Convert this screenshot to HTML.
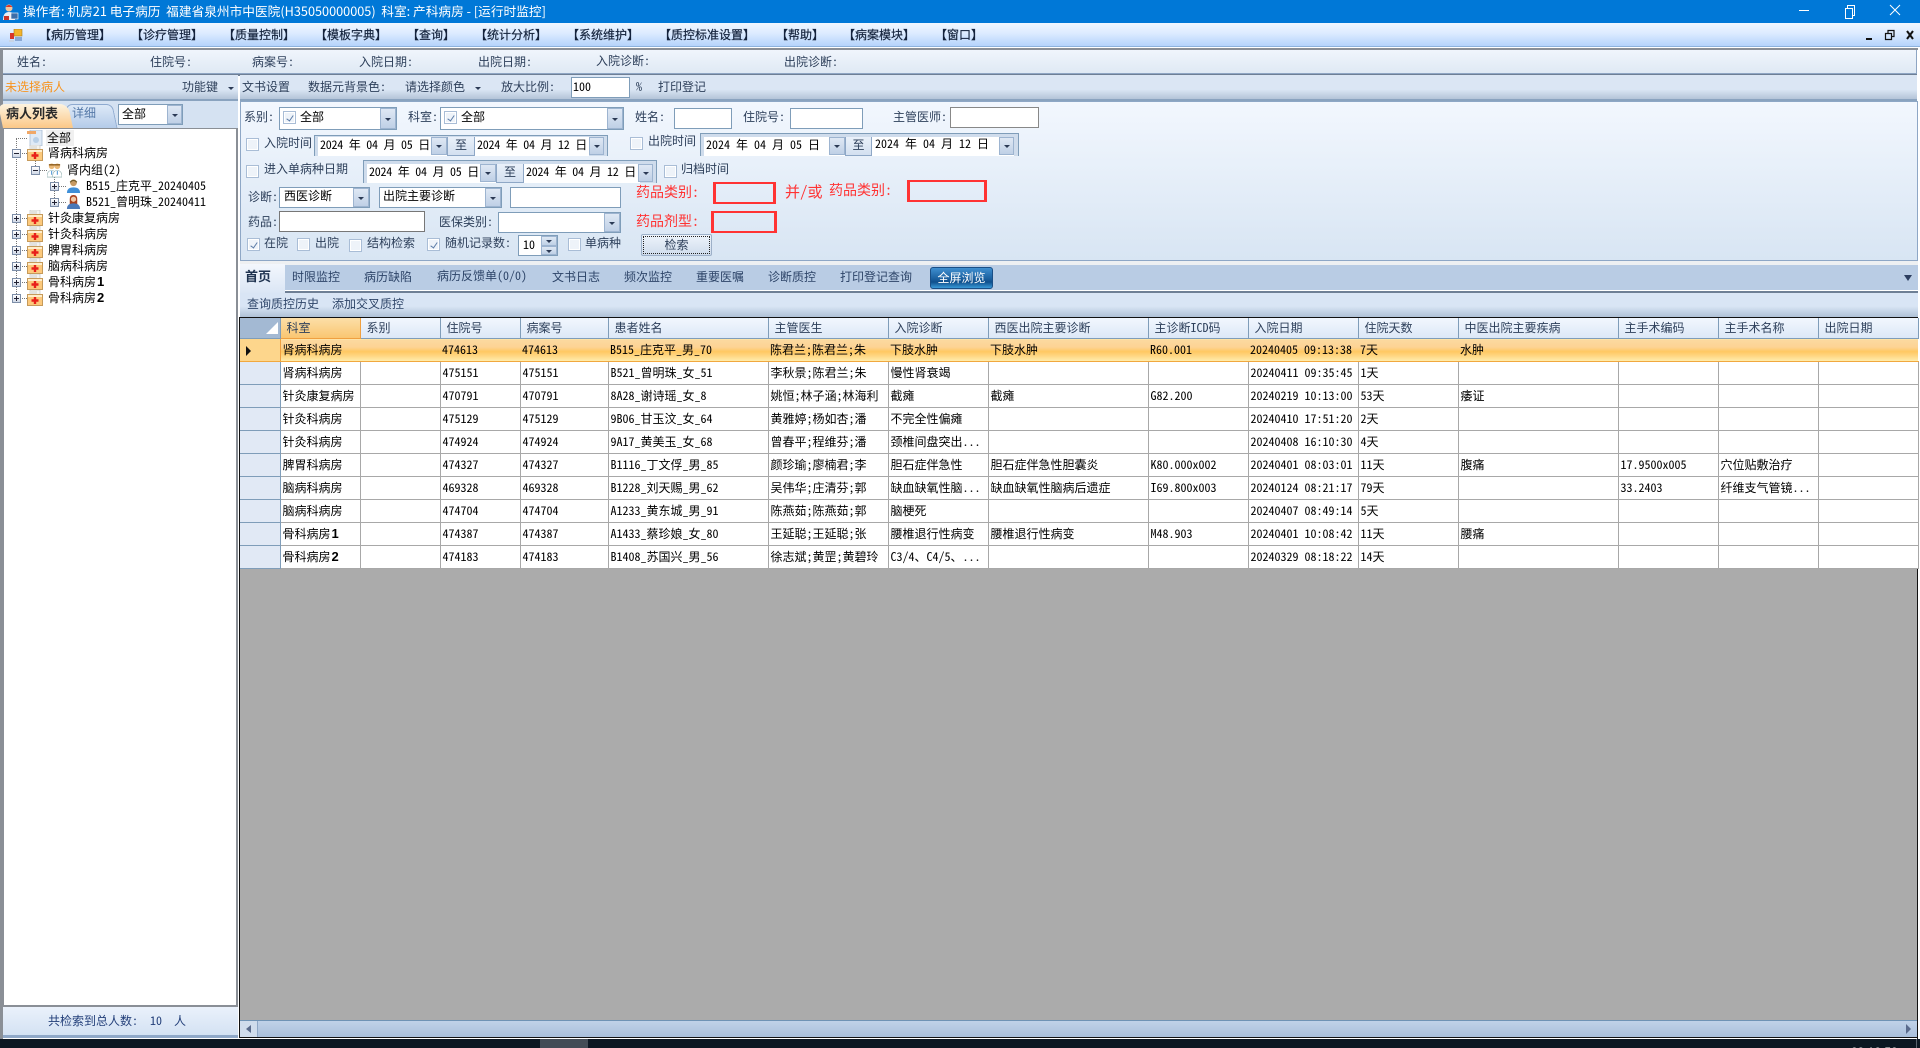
<!DOCTYPE html>
<html lang="zh"><head><meta charset="utf-8"><title>运行时监控</title>
<style>
html,body{margin:0;padding:0;width:1920px;height:1048px;overflow:hidden;background:#fff}
body{position:relative;font:12px/16px "Noto Sans Mono CJK SC","IPAGothic","WenQuanYi Zen Hei","Noto Sans CJK SC",monospace;color:#000}
div,span,svg,table,th,td{box-sizing:border-box}
.a,.t,.i,.c,.b,.k,.r{position:absolute}
.t{white-space:pre;height:16px;line-height:16px}
.l{color:#2d3f5a}
.i{background:#fff;border:1px solid #7f9db9}
.c{background:#fff;border:1px solid #7f9db9}
.b{background:linear-gradient(#dfe8f4,#bfd0e6);border:1px solid #9db4d0}
.b:after{content:"";position:absolute;left:50%;top:50%;margin:-1px 0 0 -3px;border:3px solid transparent;border-top:3px solid #2b3a55;border-bottom:0}
.k{width:13px;height:13px;background:#eef3f9;border:1px solid #a9bdd6;box-shadow:inset 0 0 0 1px #fff}
.k.on:after{content:"";position:absolute;left:4px;top:2px;width:3px;height:6px;border:solid #5a7aa6;border-width:0 1.5px 1.5px 0;transform:rotate(35deg)}
.r{border:solid #f33;border-width:2px 3px}
.red{color:#f33;font-size:14px;letter-spacing:0}
.m{font-size:12px;color:#14233c;-webkit-text-stroke:.2px #14233c}
.tab{color:#2d4468}
.p{width:9px;height:9px;background:linear-gradient(#fff,#cfd8e6);border:1px solid #7d8ea8;position:absolute}
.p:before{content:"";position:absolute;left:1px;right:1px;top:3px;height:1px;background:#223}
.p.plus:after{content:"";position:absolute;top:1px;bottom:1px;left:3px;width:1px;background:#223}
.dv{position:absolute;border-left:1px dotted #777}
.dh{position:absolute;border-top:1px dotted #777}
table{position:absolute;left:240px;top:318px;width:1678px;border-collapse:collapse;table-layout:fixed;background:#fff}
th,td{padding:0 0 0 2px;overflow:hidden;white-space:nowrap;font-weight:normal;text-align:left}
th{height:20px;padding-left:6px;background:linear-gradient(#f2f7fe,#dce8f7);border-right:1px solid #7f9db9;border-bottom:1px solid #7f9db9;color:#2d3f5a;line-height:20px}
td{height:23px;border-right:1px solid #a8a8a8;border-bottom:1px solid #a8a8a8;line-height:22px}
td.h{background:#e1e9f5;border-right:1px solid #7f9db9;border-bottom:1px solid #7f9db9;padding:0}
tr.s td{background:linear-gradient(#fcd9a0 0,#fdd394 35%,#ffc862 55%,#ffd784 75%,#ffefb0 100%);border-right:0;border-bottom:1px solid #f1a83f}
tr.s td.h{background:#fdd68c;border-right:1px solid #f0a040;position:relative}
b.n{font:bold 13px "Liberation Sans",sans-serif;margin-left:1px}
</style></head><body>
<svg width="0" height="0" style="position:absolute"><defs>
<symbol id="fold" viewBox="0 0 16 16"><rect x="3" y="0" width="10" height="6" fill="#f4f4f0" stroke="#bbb" stroke-width=".6"/><path d="M5 1v4M7 1v4M9 1v4" stroke="#aaa" stroke-width=".5"/><rect x=".5" y="4.500" width="15" height="11" fill="#fcc97c" stroke="#c69a5a"/><rect x="1" y="5" width="14" height="2" fill="#ffeecb"/><path d="M8 7v7M4.500 10.500h7" stroke="#e8201a" stroke-width="2.400"/></symbol>
<symbol id="male" viewBox="0 0 16 16"><circle cx="8" cy="4.500" r="3.600" fill="#c79a63"/><path d="M4.400 4q3.600-4 7.200 0" fill="none" stroke="#6b5a2a" stroke-width="1.200"/><path d="M1 15.500q0-6 7-6t7 6z" fill="#3f8fd8"/></symbol>
<symbol id="fem" viewBox="0 0 16 16"><path d="M4 11V5q0-4.500 4-4.500T12 5v6z" fill="#a8421f"/><circle cx="8" cy="5" r="2.800" fill="#f0c9a8"/><path d="M1 15.500q0-6 7-6t7 6z" fill="#4a78b8"/></symbol>
<symbol id="doc" viewBox="0 0 16 16"><circle cx="5" cy="4" r="3" fill="#e9b878"/><circle cx="11" cy="4" r="3" fill="#e9b878"/><path d="M2 2.500h6M8 2.500h6" stroke="#8a5a1a" stroke-width="1.500"/><path d="M0 15.500q0-7 5-7t5 7z" fill="#fff" stroke="#8aa" stroke-width=".6"/><path d="M6 15.500q0-7 5-7t5 7z" fill="#fff" stroke="#8aa" stroke-width=".6"/><path d="M5 9v4M11 9v4" stroke="#3a8ad0"/></symbol>
</defs></svg>

<!-- title bar -->
<div class="a" style="left:0;top:0;width:1920px;height:23px;background:#0078d7"></div>
<svg class="a" style="left:2px;top:3px" width="17" height="18" viewBox="0 0 17 18"><circle cx="7" cy="5" r="3.500" fill="#f0c8a0"/><path d="M3.500 4q3.500-4 7 0" fill="#d8352a"/><path d="M1 17q0-8 6-8t6 8z" fill="#e9edf3"/><rect x="9" y="10" width="7" height="6" fill="#3c6ea8" stroke="#fff" stroke-width=".6"/><rect x="2" y="13" width="5" height="4" fill="#c8352a"/></svg>
<div class="t" style="left:23px;top:3px;color:#fff;font:12.700px/16px 'Noto Sans CJK SC','WenQuanYi Zen Hei',sans-serif">操作者: 机房21 电子病历  福建省泉州市中医院(H35050000005)  科室: 产科病房 - [运行时监控]</div>
<svg class="a" style="left:1795px;top:0" width="120" height="23"><path d="M4 10.500h10" stroke="#fff"/><path d="M50.500 8.500h7v10h-7zM52.500 8V5.500h7v10H58" fill="none" stroke="#fff"/><path d="M95 5l10 10M105 5l-10 10" stroke="#fff"/></svg>

<!-- menu bar -->
<div class="a" style="left:0;top:23px;width:1920px;height:24px;background:linear-gradient(#f0f7ff,#dcebff 45%,#b5d3fb);border-bottom:1px solid #8db2dc"></div>
<svg class="a" style="left:9px;top:29px" width="14" height="13"><rect x="5" y="0" width="8" height="7" fill="#f3b32a" stroke="#a87c1a" stroke-width=".6"/><rect x="1" y="4" width="4" height="6" fill="#d8352a"/><rect x="6" y="8" width="7" height="4" fill="#8aa8d4"/><rect x="0" y="11" width="5" height="2" fill="#c8d4e4"/></svg>
<div class="t m" style="left:39px;top:27px">【病历管理】</div>
<div class="t m" style="left:131px;top:27px">【诊疗管理】</div>
<div class="t m" style="left:223px;top:27px">【质量控制】</div>
<div class="t m" style="left:315px;top:27px">【模板字典】</div>
<div class="t m" style="left:407px;top:27px">【查询】</div>
<div class="t m" style="left:475px;top:27px">【统计分析】</div>
<div class="t m" style="left:567px;top:27px">【系统维护】</div>
<div class="t m" style="left:659px;top:27px">【质控标准设置】</div>
<div class="t m" style="left:776px;top:27px">【帮助】</div>
<div class="t m" style="left:843px;top:27px">【病案模块】</div>
<div class="t m" style="left:935px;top:27px">【窗口】</div>
<svg class="a" style="left:1860px;top:27px" width="58" height="16"><path d="M6 11h6v2H6z" fill="#111"/><path d="M25.500 6.500h6v6h-6zM28 6V3.500h6v6h-2" fill="none" stroke="#111" stroke-width="1.200"/><path d="M47 4l6 8M53 4l-6 8" stroke="#111" stroke-width="2"/></svg>

<!-- frame -->
<div class="a" style="left:0;top:47px;width:1920px;height:1001px;background:#fff"></div>
<div class="a" style="left:0;top:48px;width:1918px;height:2px;background:#8a8f96"></div>
<div class="a" style="left:0;top:48px;width:3px;height:990px;background:#8a8f96"></div>
<div class="a" style="left:3px;top:50px;width:1914px;height:24px;background:linear-gradient(#f0f5fc,#dfe9f4);border:1px solid #8ea5c3;border-width:0 1px 1px 0"></div>
<div class="a" style="left:3px;top:74px;width:1914px;height:2px;background:#6e7f95"></div>
<div class="t l" style="left:17px;top:54px">姓名:</div>
<div class="t l" style="left:150px;top:54px">住院号:</div>
<div class="t l" style="left:252px;top:54px">病案号:</div>
<div class="t l" style="left:359px;top:54px">入院日期:</div>
<div class="t l" style="left:478px;top:54px">出院日期:</div>
<div class="t l" style="left:596px;top:53px">入院诊断:</div>
<div class="t l" style="left:784px;top:54px">出院诊断:</div>

<!-- toolbar -->
<div class="a" style="left:3px;top:75px;width:235px;height:26px;background:linear-gradient(#dbe6f4 60%,#b4c4d8);border-bottom:2px solid #8aa3bf"></div>
<div class="a" style="left:240px;top:75px;width:1677px;height:26px;background:linear-gradient(#dbe6f4 60%,#b4c4d8);border-bottom:2px solid #8aa3bf"></div>
<div class="t" style="left:5px;top:79px;color:#f7931e">未选择病人</div>
<div class="t l" style="left:182px;top:79px">功能键</div>
<div class="a" style="left:228px;top:87px;border:3px solid transparent;border-top:3px solid #2b3a55"></div>
<div class="t l" style="left:242px;top:79px">文书设置</div>
<div class="t l" style="left:308px;top:79px">数据元背景色:</div>
<div class="t l" style="left:405px;top:79px">请选择颜色</div>
<div class="a" style="left:475px;top:87px;border:3px solid transparent;border-top:3px solid #2b3a55"></div>
<div class="t l" style="left:501px;top:79px">放大比例:</div>
<div class="i" style="left:571px;top:77px;width:59px;height:21px"></div>
<div class="t" style="left:573px;top:79px">100</div>
<div class="t l" style="left:636px;top:79px">%</div>
<div class="t l" style="left:658px;top:79px">打印登记</div>

<!-- left panel -->
<div class="a" style="left:3px;top:101px;width:235px;height:27px;background:#d5e2f2"></div>
<div class="a" style="left:67px;top:104px;width:48px;height:24px;background:linear-gradient(#dde9f7,#b4cbe9);border:1px solid #8eaad0;border-bottom:0;border-radius:8px 6px 0 0;transform:skewX(12deg)"></div>
<div class="t" style="left:72px;top:105px;color:#5579a8;font-size:12px">详细</div>
<div class="a" style="left:3px;top:104px;width:70px;height:24px;background:linear-gradient(#fdf3df,#fbc887);border-radius:7px 8px 0 0;transform-origin:0 100%;transform:skewX(12deg)"></div>
<div class="t" style="left:6px;top:105px;font-size:13px;font-weight:bold;color:#2a2a2a">病人列表</div>
<div class="c" style="left:118px;top:104px;width:65px;height:21px"></div>
<div class="t" style="left:122px;top:106px">全部</div>
<div class="b" style="left:167px;top:105px;width:15px;height:19px"></div>
<div class="a" style="left:3px;top:128px;width:235px;height:879px;background:#fff;border:1px solid #8a8f96;border-width:1px 2px 2px 1px"></div>

<div class="dv" style="left:16px;top:138px;height:160px"></div>
<div class="dh" style="left:16px;top:138px;width:11px"></div>
<div class="dv" style="left:35px;top:158px;height:12px"></div>
<div class="dv" style="left:54px;top:176px;height:26px"></div>
<div class="dh" style="left:20px;top:153px;width:7px"></div>
<div class="dh" style="left:39px;top:170px;width:8px"></div>
<div class="dh" style="left:58px;top:186px;width:8px"></div>
<div class="dh" style="left:58px;top:202px;width:8px"></div>
<div class="dh" style="left:20px;top:218px;width:7px"></div>
<div class="dh" style="left:20px;top:234px;width:7px"></div>
<div class="dh" style="left:20px;top:250px;width:7px"></div>
<div class="dh" style="left:20px;top:266px;width:7px"></div>
<div class="dh" style="left:20px;top:282px;width:7px"></div>
<div class="dh" style="left:20px;top:298px;width:7px"></div>
<div class="p" style="left:12px;top:149px"></div>
<div class="p" style="left:31px;top:166px"></div>
<div class="p plus" style="left:50px;top:182px"></div>
<div class="p plus" style="left:50px;top:198px"></div>
<div class="p plus" style="left:12px;top:214px"></div>
<div class="p plus" style="left:12px;top:230px"></div>
<div class="p plus" style="left:12px;top:246px"></div>
<div class="p plus" style="left:12px;top:262px"></div>
<div class="p plus" style="left:12px;top:278px"></div>
<div class="p plus" style="left:12px;top:294px"></div>
<svg class="a" style="left:27px;top:130px" width="16" height="16"><rect x="3" y="0" width="12" height="16" fill="#dfeaf6" stroke="#a8bcd4" stroke-width=".8"/><rect x="0" y="1" width="9" height="3" fill="#f0a868"/><circle cx="9" cy="10" r="3" fill="#b8d0e8"/></svg>
<svg class="a" style="left:27px;top:145px" width="16" height="16"><use href="#fold"/></svg>
<svg class="a" style="left:47px;top:162px" width="15" height="16"><use href="#doc"/></svg>
<svg class="a" style="left:66px;top:178px" width="15" height="16"><use href="#male"/></svg>
<svg class="a" style="left:66px;top:194px" width="15" height="16"><use href="#fem"/></svg>
<svg class="a" style="left:27px;top:210px" width="16" height="16"><use href="#fold"/></svg>
<svg class="a" style="left:27px;top:226px" width="16" height="16"><use href="#fold"/></svg>
<svg class="a" style="left:27px;top:242px" width="16" height="16"><use href="#fold"/></svg>
<svg class="a" style="left:27px;top:258px" width="16" height="16"><use href="#fold"/></svg>
<svg class="a" style="left:27px;top:274px" width="16" height="16"><use href="#fold"/></svg>
<svg class="a" style="left:27px;top:290px" width="16" height="16"><use href="#fold"/></svg>
<div class="a" style="left:46px;top:130px;width:28px;height:16px;background:#f0f0f0"></div>
<div class="t" style="left:47px;top:130px">全部</div>
<div class="t" style="left:48px;top:145px">肾病科病房</div>
<div class="t" style="left:67px;top:162px">肾内组(2)</div>
<div class="t" style="left:86px;top:178px">B515_庄克平_20240405</div>
<div class="t" style="left:86px;top:194px">B521_曾明珠_20240411</div>
<div class="t" style="left:48px;top:210px">针灸康复病房</div>
<div class="t" style="left:48px;top:226px">针灸科病房</div>
<div class="t" style="left:48px;top:242px">脾胃科病房</div>
<div class="t" style="left:48px;top:258px">脑病科病房</div>
<div class="t" style="left:48px;top:274px">骨科病房<b class="n">1</b></div>
<div class="t" style="left:48px;top:290px">骨科病房<b class="n">2</b></div>
<div class="a" style="left:3px;top:1007px;width:235px;height:31px;background:linear-gradient(#eaf1fb,#d4e2f3);border-bottom:3px solid #8fa8c8"></div>
<div class="t" style="left:48px;top:1013px;color:#24407a">共检索到总人数:  10  人</div>

<!-- search panel -->
<div class="a" style="left:240px;top:101px;width:1678px;height:160px;background:linear-gradient(#f2f7fe,#d8e5f3);border:1px solid #8ea7c6"></div>
<div class="t l" style="left:244px;top:109px">系别:</div>
<div class="c" style="left:279px;top:107px;width:118px;height:23px"></div>
<div class="k on" style="left:283px;top:111px"></div>
<div class="t" style="left:300px;top:109px">全部</div>
<div class="b" style="left:380px;top:108px;width:16px;height:21px"></div>
<div class="t l" style="left:408px;top:109px">科室:</div>
<div class="c" style="left:440px;top:107px;width:184px;height:23px"></div>
<div class="k on" style="left:444px;top:111px"></div>
<div class="t" style="left:461px;top:109px">全部</div>
<div class="b" style="left:607px;top:108px;width:16px;height:21px"></div>
<div class="t l" style="left:635px;top:109px">姓名:</div>
<div class="i" style="left:674px;top:108px;width:58px;height:21px"></div>
<div class="t l" style="left:743px;top:109px">住院号:</div>
<div class="i" style="left:790px;top:108px;width:73px;height:21px"></div>
<div class="t l" style="left:893px;top:109px">主管医师:</div>
<div class="i" style="left:950px;top:107px;width:89px;height:21px;border-color:#888"></div>

<!-- date rows -->
<div class="k" style="left:246px;top:138px"></div>
<div class="t l" style="left:264px;top:135px">入院时间</div>
<div class="a" style="left:314px;top:135px;width:294px;height:21px;background:#cfdcec;border:1px solid #7f9db9;border-bottom:0"></div>
<div class="a" style="left:318px;top:137px;width:129px;height:19px;background:#fff"></div>
<div class="a" style="left:475px;top:137px;width:114px;height:19px;background:#fff"></div>
<div class="t" style="left:320px;top:137px;letter-spacing:-.25px">2024 年 04 月 05 日</div>
<div class="t" style="left:477px;top:137px;letter-spacing:-.25px">2024 年 04 月 12 日</div>
<div class="b" style="left:431px;top:137px;width:16px;height:18px"></div>
<div class="a" style="left:447px;top:137px;width:28px;height:19px;background:linear-gradient(#eaf1fa,#d3e0f0);border:1px solid #8ea7c6;border-top:0;text-align:center;line-height:16px;color:#2d3f5a">至</div>
<div class="b" style="left:589px;top:137px;width:15px;height:18px"></div>

<div class="k" style="left:630px;top:137px"></div>
<div class="t l" style="left:648px;top:133px">出院时间</div>
<div class="a" style="left:700px;top:133px;width:319px;height:23px;background:#cfdcec;border:1px solid #7f9db9;border-bottom:0"></div>
<div class="a" style="left:704px;top:137px;width:141px;height:19px;background:#fff"></div>
<div class="a" style="left:872px;top:137px;width:142px;height:19px;background:#fff"></div>
<div class="t" style="left:706px;top:137px">2024 年 04 月 05 日</div>
<div class="t" style="left:875px;top:136px">2024 年 04 月 12 日</div>
<div class="b" style="left:829px;top:137px;width:16px;height:18px"></div>
<div class="a" style="left:845px;top:137px;width:27px;height:19px;background:linear-gradient(#eaf1fa,#d3e0f0);border:1px solid #8ea7c6;border-top:0;text-align:center;line-height:16px;color:#2d3f5a">至</div>
<div class="b" style="left:999px;top:137px;width:15px;height:18px"></div>

<div class="k" style="left:246px;top:165px"></div>
<div class="t l" style="left:264px;top:161px">进入单病种日期</div>
<div class="a" style="left:363px;top:160px;width:294px;height:23px;background:#cfdcec;border:1px solid #7f9db9;border-bottom:0"></div>
<div class="a" style="left:367px;top:164px;width:129px;height:19px;background:#fff"></div>
<div class="a" style="left:524px;top:164px;width:116px;height:19px;background:#fff"></div>
<div class="t" style="left:369px;top:164px;letter-spacing:-.25px">2024 年 04 月 05 日</div>
<div class="t" style="left:526px;top:164px;letter-spacing:-.25px">2024 年 04 月 12 日</div>
<div class="b" style="left:480px;top:164px;width:16px;height:18px"></div>
<div class="a" style="left:496px;top:164px;width:28px;height:19px;background:linear-gradient(#eaf1fa,#d3e0f0);border:1px solid #8ea7c6;border-top:0;text-align:center;line-height:16px;color:#2d3f5a">至</div>
<div class="b" style="left:638px;top:164px;width:15px;height:18px"></div>
<div class="k" style="left:664px;top:165px"></div>
<div class="t l" style="left:681px;top:161px">归档时间</div>

<!-- red fields -->
<div class="t red" style="left:636px;top:184px">药品类别:</div>
<div class="r" style="left:713px;top:182px;width:63px;height:22px"></div>
<div class="t red" style="left:785px;top:184px;font-size:15px">并/或</div>
<div class="t red" style="left:829px;top:182px">药品类别:</div>
<div class="r" style="left:907px;top:180px;width:80px;height:22px"></div>
<div class="t red" style="left:636px;top:213px">药品剂型:</div>
<div class="r" style="left:711px;top:211px;width:66px;height:22px"></div>

<!-- diagnosis rows -->
<div class="t l" style="left:248px;top:189px">诊断:</div>
<div class="c" style="left:279px;top:187px;width:91px;height:21px"></div>
<div class="t" style="left:284px;top:188px">西医诊断</div>
<div class="b" style="left:353px;top:188px;width:16px;height:19px"></div>
<div class="c" style="left:379px;top:187px;width:123px;height:21px"></div>
<div class="t" style="left:383px;top:188px">出院主要诊断</div>
<div class="b" style="left:485px;top:188px;width:16px;height:19px"></div>
<div class="i" style="left:510px;top:187px;width:111px;height:21px"></div>
<div class="t l" style="left:248px;top:214px">药品:</div>
<div class="i" style="left:279px;top:211px;width:146px;height:21px;border-color:#777"></div>
<div class="t l" style="left:439px;top:214px">医保类别:</div>
<div class="c" style="left:498px;top:212px;width:123px;height:21px"></div>
<div class="b" style="left:604px;top:213px;width:16px;height:19px"></div>

<!-- checkboxes -->
<div class="k on" style="left:247px;top:238px"></div>
<div class="t l" style="left:264px;top:235px">在院</div>
<div class="k" style="left:297px;top:238px"></div>
<div class="t l" style="left:315px;top:235px">出院</div>
<div class="k" style="left:349px;top:239px"></div>
<div class="t l" style="left:367px;top:235px">结构检索</div>
<div class="k on" style="left:427px;top:238px"></div>
<div class="t l" style="left:445px;top:235px">随机记录数:</div>
<div class="c" style="left:518px;top:235px;width:40px;height:21px"></div>
<div class="t" style="left:523px;top:237px">10</div>
<div class="b" style="left:541px;top:236px;width:16px;height:10px"></div>
<div class="b" style="left:541px;top:246px;width:16px;height:9px"></div>
<div class="k" style="left:568px;top:238px"></div>
<div class="t l" style="left:585px;top:235px">单病种</div>
<div class="a" style="left:641px;top:234px;width:71px;height:22px;background:linear-gradient(#eef4fb,#cfdcec);border:1px solid #9db0c8;border-radius:2px"></div>
<div class="a" style="left:643px;top:236px;width:67px;height:18px;border:1px dotted #222;text-align:center;line-height:15px;color:#2d3f5a">检索</div>

<!-- tab strip -->
<div class="a" style="left:240px;top:261px;width:1678px;height:4px;background:#eef0f2"></div>
<div class="a" style="left:240px;top:265px;width:1678px;height:25px;background:#b9cce4"></div>
<div class="a" style="left:240px;top:291px;width:1678px;height:2px;background:#6e7f95"></div>
<div class="a" style="left:240px;top:264px;width:45px;height:29px;background:linear-gradient(#f3f7fd,#dbe6f5)"></div>
<div class="t" style="left:245px;top:268px;font-size:13px;font-weight:bold;color:#1f3350">首页</div>
<div class="t tab" style="left:292px;top:269px">时限监控</div>
<div class="t tab" style="left:364px;top:269px">病历缺陷</div>
<div class="t tab" style="left:437px;top:268px">病历反馈单(0/0)</div>
<div class="t tab" style="left:552px;top:269px">文书日志</div>
<div class="t tab" style="left:624px;top:269px">频次监控</div>
<div class="t tab" style="left:696px;top:269px">重要医嘱</div>
<div class="t tab" style="left:768px;top:269px">诊断质控</div>
<div class="t tab" style="left:840px;top:269px">打印登记查询</div>
<div class="a" style="left:930px;top:267px;width:63px;height:22px;background:linear-gradient(#3f8fd0,#1a5f9e 55%,#0f4f8c 70%,#3a9ad8);border:1px solid #1a4f86;border-radius:3px;color:#fff;text-align:center;line-height:19px">全屏浏览</div>
<div class="a" style="left:1904px;top:275px;border:4px solid transparent;border-top:6px solid #2c3e60;border-bottom:0"></div>

<!-- sub toolbar -->
<div class="a" style="left:240px;top:293px;width:1678px;height:25px;background:linear-gradient(#d9e5f5 55%,#afc1d6);border-bottom:1px solid #8aa3bf"></div>
<div class="t tab" style="left:247px;top:296px">查询质控历史</div>
<div class="t tab" style="left:332px;top:296px">添加交叉质控</div>

<!-- grid background -->
<div class="a" style="left:239px;top:317px;width:1679px;height:721px;background:#ababab;border:1px solid #111;border-width:1px 0 1px 1px"></div>
<div class="a" style="left:1917px;top:317px;width:1px;height:722px;background:#111"></div>
<table>
<colgroup><col style="width:40px"><col style="width:80px"><col style="width:80px"><col style="width:80px"><col style="width:88px"><col style="width:160px"><col style="width:120px"><col style="width:100px"><col style="width:160px"><col style="width:100px"><col style="width:110px"><col style="width:100px"><col style="width:160px"><col style="width:100px"><col style="width:100px"><col style="width:100px"></colgroup>
<tr><th style="background:#a3b9d3;border-right:1px solid #7f9db9"></th><th style="background:linear-gradient(#fcdfa8,#fac671);border-right:1px solid #f0a040;border-bottom:1px solid #f0a040">科室</th><th>系别</th><th>住院号</th><th>病案号</th><th>患者姓名</th><th>主管医生</th><th>入院诊断</th><th>西医出院主要诊断</th><th>主诊断ICD码</th><th>入院日期</th><th>住院天数</th><th>中医出院主要疾病</th><th>主手术编码</th><th>主手术名称</th><th>出院日期</th></tr>
<tr class="s"><td class="h"></td><td>肾病科病房</td><td></td><td>474613</td><td>474613</td><td>B515_庄克平_男_70</td><td>陈君兰;陈君兰;朱</td><td>下肢水肿</td><td>下肢水肿</td><td>R60.001</td><td>20240405 09:13:38</td><td>7天</td><td>水肿</td><td></td><td></td><td></td></tr>
<tr><td class="h"></td><td>肾病科病房</td><td></td><td>475151</td><td>475151</td><td>B521_曾明珠_女_51</td><td>李秋景;陈君兰;朱</td><td>慢性肾衰竭</td><td></td><td></td><td>20240411 09:35:45</td><td>1天</td><td></td><td></td><td></td><td></td></tr>
<tr><td class="h"></td><td>针灸康复病房</td><td></td><td>470791</td><td>470791</td><td>8A28_谢诗瑶_女_8</td><td>姚恒;林子涵;林海利</td><td>截瘫</td><td>截瘫</td><td>G82.200</td><td>20240219 10:13:00</td><td>53天</td><td>痿证</td><td></td><td></td><td></td></tr>
<tr><td class="h"></td><td>针灸科病房</td><td></td><td>475129</td><td>475129</td><td>9B06_甘玉汶_女_64</td><td>黄雅婷;杨如杏;潘</td><td>不完全性偏瘫</td><td></td><td></td><td>20240410 17:51:20</td><td>2天</td><td></td><td></td><td></td><td></td></tr>
<tr><td class="h"></td><td>针灸科病房</td><td></td><td>474924</td><td>474924</td><td>9A17_黄美玉_女_68</td><td>曾春平;程维芬;潘</td><td>颈椎间盘突出...</td><td></td><td></td><td>20240408 16:10:30</td><td>4天</td><td></td><td></td><td></td><td></td></tr>
<tr><td class="h"></td><td>脾胃科病房</td><td></td><td>474327</td><td>474327</td><td>B1116_丁文俘_男_85</td><td>颜珍瑜;廖楠君;李</td><td>胆石症伴急性</td><td>胆石症伴急性胆囊炎</td><td>K80.000x002</td><td>20240401 08:03:01</td><td>11天</td><td>腹痛</td><td>17.9500x005</td><td>穴位贴敷治疗</td><td></td></tr>
<tr><td class="h"></td><td>脑病科病房</td><td></td><td>469328</td><td>469328</td><td>B1228_刘天赐_男_62</td><td>吴伟华;庄清芬;郭</td><td>缺血缺氧性脑...</td><td>缺血缺氧性脑病后遗症</td><td>I69.800x003</td><td>20240124 08:21:17</td><td>79天</td><td></td><td>33.2403</td><td>纤维支气管镜...</td><td></td></tr>
<tr><td class="h"></td><td>脑病科病房</td><td></td><td>474704</td><td>474704</td><td>A1233_黄东城_男_91</td><td>陈燕茹;陈燕茹;郭</td><td>脑梗死</td><td></td><td></td><td>20240407 08:49:14</td><td>5天</td><td></td><td></td><td></td><td></td></tr>
<tr><td class="h"></td><td>骨科病房<b class="n">1</b></td><td></td><td>474387</td><td>474387</td><td>A1433_蔡珍娘_女_80</td><td>王延聪;王延聪;张</td><td>腰椎退行性病变</td><td>腰椎退行性病变</td><td>M48.903</td><td>20240401 10:08:42</td><td>11天</td><td>腰痛</td><td></td><td></td><td></td></tr>
<tr><td class="h"></td><td>骨科病房<b class="n">2</b></td><td></td><td>474183</td><td>474183</td><td>B1408_苏国兴_男_56</td><td>徐志斌;黄罡;黄碧玲</td><td>C3/4、C4/5、...</td><td></td><td></td><td>20240329 08:18:22</td><td>14天</td><td></td><td></td><td></td><td></td></tr>
</table>
<div class="a" style="left:266px;top:322px;border-style:solid;border-width:0 0 12px 12px;border-color:transparent transparent #fff transparent"></div>
<div class="a" style="left:246px;top:346px;border-style:solid;border-width:5px 0 5px 5px;border-color:transparent transparent transparent #111"></div>

<!-- scrollbar -->
<div class="a" style="left:240px;top:1020px;width:1677px;height:17px;background:linear-gradient(#c0d2e8,#a9bfdb);border-top:1px solid #6f93b5"></div>
<div class="a" style="left:240px;top:1021px;width:18px;height:16px;background:#cfdcec;border-right:1px solid #8ea7c6"></div>
<div class="a" style="left:246px;top:1025px;border-style:solid;border-width:4px 5px 4px 0;border-color:transparent #5a6b8c transparent transparent"></div>
<div class="a" style="left:1906px;top:1024px;border-style:solid;border-width:5px 0 5px 5px;border-color:transparent transparent transparent #5a6b8c"></div>
<div class="a" style="left:0;top:1037px;width:3px;height:2px;background:#8a8f96"></div>

<!-- taskbar -->
<div class="a" style="left:0;top:1039px;width:1920px;height:9px;background:#0c1722;overflow:hidden">
<div class="a" style="left:540px;top:0;width:48px;height:9px;background:#434c56"></div>
<div class="a" style="left:1916px;top:0;width:1px;height:9px;background:#5a636e"></div>
<div class="t" style="left:1851px;top:5px;color:#fff;font:12px/16px 'Liberation Sans',sans-serif">09:10:50</div>
</div>
</body></html>
